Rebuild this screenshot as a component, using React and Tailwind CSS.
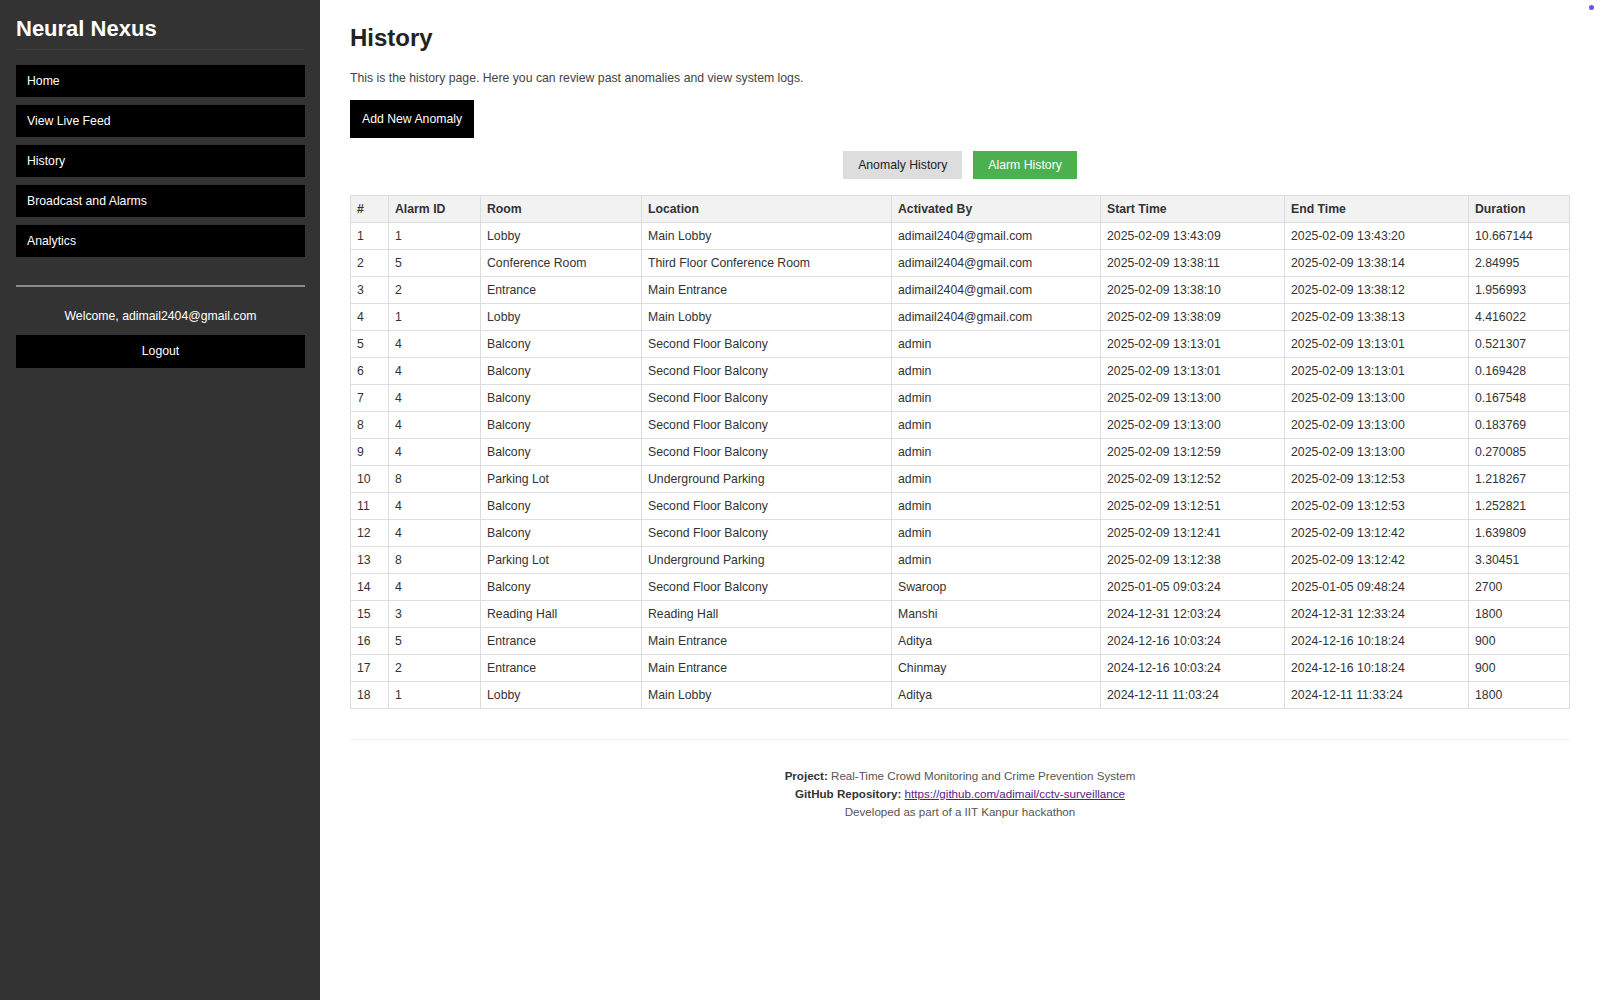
const navItems = ['Home', 'View Live Feed', 'History', 'Broadcast and Alarms', 'Analytics'];

const rows = [
  [1, 1, 'Lobby', 'Main Lobby', 'adimail2404@gmail.com', '2025-02-09 13:43:09', '2025-02-09 13:43:20', '10.667144'],
  [2, 5, 'Conference Room', 'Third Floor Conference Room', 'adimail2404@gmail.com', '2025-02-09 13:38:11', '2025-02-09 13:38:14', '2.84995'],
  [3, 2, 'Entrance', 'Main Entrance', 'adimail2404@gmail.com', '2025-02-09 13:38:10', '2025-02-09 13:38:12', '1.956993'],
  [4, 1, 'Lobby', 'Main Lobby', 'adimail2404@gmail.com', '2025-02-09 13:38:09', '2025-02-09 13:38:13', '4.416022'],
  [5, 4, 'Balcony', 'Second Floor Balcony', 'admin', '2025-02-09 13:13:01', '2025-02-09 13:13:01', '0.521307'],
  [6, 4, 'Balcony', 'Second Floor Balcony', 'admin', '2025-02-09 13:13:01', '2025-02-09 13:13:01', '0.169428'],
  [7, 4, 'Balcony', 'Second Floor Balcony', 'admin', '2025-02-09 13:13:00', '2025-02-09 13:13:00', '0.167548'],
  [8, 4, 'Balcony', 'Second Floor Balcony', 'admin', '2025-02-09 13:13:00', '2025-02-09 13:13:00', '0.183769'],
  [9, 4, 'Balcony', 'Second Floor Balcony', 'admin', '2025-02-09 13:12:59', '2025-02-09 13:13:00', '0.270085'],
  [10, 8, 'Parking Lot', 'Underground Parking', 'admin', '2025-02-09 13:12:52', '2025-02-09 13:12:53', '1.218267'],
  [11, 4, 'Balcony', 'Second Floor Balcony', 'admin', '2025-02-09 13:12:51', '2025-02-09 13:12:53', '1.252821'],
  [12, 4, 'Balcony', 'Second Floor Balcony', 'admin', '2025-02-09 13:12:41', '2025-02-09 13:12:42', '1.639809'],
  [13, 8, 'Parking Lot', 'Underground Parking', 'admin', '2025-02-09 13:12:38', '2025-02-09 13:12:42', '3.30451'],
  [14, 4, 'Balcony', 'Second Floor Balcony', 'Swaroop', '2025-01-05 09:03:24', '2025-01-05 09:48:24', '2700'],
  [15, 3, 'Reading Hall', 'Reading Hall', 'Manshi', '2024-12-31 12:03:24', '2024-12-31 12:33:24', '1800'],
  [16, 5, 'Entrance', 'Main Entrance', 'Aditya', '2024-12-16 10:03:24', '2024-12-16 10:18:24', '900'],
  [17, 2, 'Entrance', 'Main Entrance', 'Chinmay', '2024-12-16 10:03:24', '2024-12-16 10:18:24', '900'],
  [18, 1, 'Lobby', 'Main Lobby', 'Aditya', '2024-12-11 11:03:24', '2024-12-11 11:33:24', '1800'],
];

const headers = [
  { label: '#', w: 'w-[38px]' },
  { label: 'Alarm ID', w: 'w-[92px]' },
  { label: 'Room', w: 'w-[161px]' },
  { label: 'Location', w: 'w-[250px]' },
  { label: 'Activated By', w: 'w-[209px]' },
  { label: 'Start Time', w: 'w-[184px]' },
  { label: 'End Time', w: 'w-[184px]' },
  { label: 'Duration', w: 'w-[101px]' },
];

export default function App() {
  const cell = "border border-[#ddd] px-[6px] py-[6px] leading-[14px] text-left";

  return (
    <div className="relative flex min-h-screen bg-white font-['Liberation_Sans',Arial,sans-serif] text-[12.25px] text-[#333]">
      {/* Sidebar */}
      <aside className="w-[320px] shrink-0 bg-[#333] p-4">
        <h2 className="border-b border-[#3f3f3f] pb-[7px] text-[22px] font-bold leading-[26px] text-white">
          Neural Nexus
        </h2>
        <nav className="mt-[15px] flex w-[289px] flex-col gap-2">
          {navItems.map((item) => (
            <a key={item} className="flex h-[32px] items-center bg-black px-[11px] pt-px text-white">
              {item}
            </a>
          ))}
        </nav>
        <hr className="mt-[28px] w-[289px] border-t-2 border-[#8a8a8a]" />
        <div className="w-[289px]">
          <p className="mt-[22px] text-center leading-[15px] text-white">Welcome, adimail2404@gmail.com</p>
          <button className="mt-[11px] h-[33px] w-full bg-black text-white">Logout</button>
        </div>
      </aside>

      {/* Main */}
      <main className="flex-1 px-[30px] pt-[24px]">
        <h1 className="text-[24px] font-bold leading-[28px] text-[#222]">History</h1>
        <p className="mt-[19px] leading-[15px] text-[#444]">
          This is the history page. Here you can review past anomalies and view system logs.
        </p>
        <button className="mt-[14px] h-[38px] bg-black px-[12px] text-white">Add New Anomaly</button>

        <div className="mt-[13px] flex justify-center gap-[11px]">
          <button className="h-[28px] bg-[#ddd] px-[15px] text-[#222]">Anomaly History</button>
          <button className="h-[28px] bg-[#4caf50] px-[15px] text-white">Alarm History</button>
        </div>

        <table className="mt-[16px] w-full table-fixed border-collapse">
          <thead>
            <tr className="bg-[#f2f2f2]">
              {headers.map((h) => (
                <th key={h.label} className={`${cell} ${h.w} font-bold text-[#333]`}>
                  {h.label}
                </th>
              ))}
            </tr>
          </thead>
          <tbody>
            {rows.map((r) => (
              <tr key={r[0]}>
                {r.map((v, i) => (
                  <td key={i} className={cell}>{v}</td>
                ))}
              </tr>
            ))}
          </tbody>
        </table>

        <footer className="mt-[30px] border-t border-[#eee] pt-[27px] text-center text-[11.6px] leading-[18px] text-[#555]">
          <p><span className="font-bold text-[#333]">Project:</span> Real-Time Crowd Monitoring and Crime Prevention System</p>
          <p>
            <span className="font-bold text-[#333]">GitHub Repository:</span>{' '}
            <a className="text-[#551a8b] underline">https://github.com/adimail/cctv-surveillance</a>
          </p>
          <p>Developed as part of a IIT Kanpur hackathon</p>
        </footer>
      </main>

      <span className="absolute right-[6px] top-[5px] h-[5px] w-[5px] rounded-full bg-[#5a5ae6]" />
    </div>
  );
}
